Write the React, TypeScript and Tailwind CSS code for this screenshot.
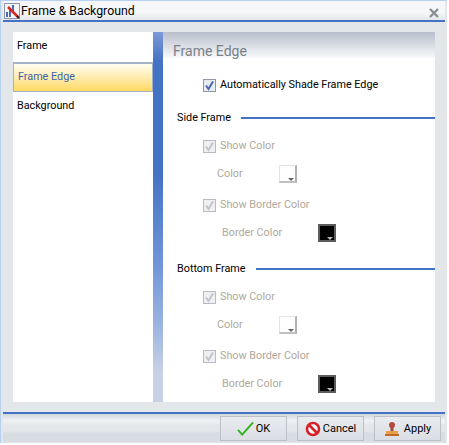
const font = "font-['Roboto',Arial,sans-serif]";

function CheckBox({ disabled }: { disabled?: boolean }) {
  return (
    <span className={`flex h-[13px] w-[13px] items-center justify-center border ${disabled ? 'border-[#b8bac8] bg-[#f0f0f2]' : 'border-[#8f98a8] bg-[#e8ebf0]'}`}>
      <svg width="11" height="11" viewBox="0 0 11 11">
        <path d="M2 5.5 L4.5 9 L9 1.5" fill="none" stroke={disabled ? '#c2c4cc' : '#4a66b0'} strokeWidth="2" />
      </svg>
    </span>
  );
}

function Swatch({ dark }: { dark?: boolean }) {
  return (
    <span className={`relative block h-[18px] w-[18px] ${dark ? 'border-2 border-[#5c5c5c] bg-black' : 'border border-b-2 border-r-2 border-t-[#e4e4e4] border-l-[#e4e4e4] border-r-[#b0b0b0] border-b-[#c0c0c0] bg-white'}`}>
      <span className={`absolute bottom-[0px] right-[1px] border-x-[3px] border-t-[3px] border-x-transparent ${dark ? 'border-t-[#bbb]' : 'border-t-[#666]'}`} />
    </span>
  );
}

function FrameGroup({ title }: { title: string }) {
  return (
    <div>
      <div className="flex h-[14px] items-center gap-[10px] pl-[14px]">
        <span className="text-black">{title}</span>
        <span className="h-[2px] flex-1 bg-[#4472c4]" />
      </div>
      <div className="mt-[14px] flex h-[14px] items-center gap-[4px] pl-[40px] text-[#b0a89c]">
        <CheckBox disabled />
        <span>Show Color</span>
      </div>
      <div className="mt-[12px] flex h-[18px] items-center pl-[54px] text-[#b0a89c]">
        <span className="w-[62px]">Color</span>
        <Swatch />
      </div>
      <div className="mt-[15px] flex h-[14px] items-center gap-[4px] pl-[40px] text-[#b0a89c]">
        <CheckBox disabled />
        <span>Show Border Color</span>
      </div>
      <div className="mt-[12px] flex h-[18px] items-center pl-[59px] text-[#b0a89c]">
        <span className="w-[96px]">Border Color</span>
        <Swatch dark />
      </div>
    </div>
  );
}

function FootButton({ children }: { children: React.ReactNode }) {
  return (
    <button className="flex h-[25px] w-[67px] items-center justify-center gap-[2px] border border-[#bcc2c8] bg-gradient-to-b from-[#e9ecef] to-[#dadee4] text-[11px] text-black">
      {children}
    </button>
  );
}

export default function App() {
  return (
    <div className={`${font} h-[445px] w-[449px] overflow-hidden bg-white text-[10.8px] leading-[14px]`}>
      <div className="flex h-[443px] w-[447px] flex-col border-l border-t border-[#b8d0f0] bg-[#e4e7ea] pl-[2px] pr-[2px]">
        <div className="flex h-[21px] items-center justify-between border-b-2 border-[#4472c4] bg-gradient-to-b from-[#f6f7f9] from-60% to-[#e4e7ea] pr-[6px]">
          <div className="flex items-center gap-[1px] pl-[1px]">
            <svg width="16" height="16" viewBox="0 0 16 16">
              <rect x="0.5" y="0.5" width="15" height="15" fill="#f4f6fa" stroke="#8a95a8" />
              <rect x="2" y="9" width="2" height="5" fill="#4a6cb8" />
              <rect x="5" y="5" width="2" height="9" fill="#4a6cb8" />
              <rect x="8" y="2" width="2" height="6" fill="#4a6cb8" />
              <path d="M4 4 L14 14" stroke="#d8261c" strokeWidth="2.5" />
              <path d="M13 13 L15 15" stroke="#222" strokeWidth="2" />
            </svg>
            <span className="text-[12.3px] text-black">Frame &amp; Background</span>
          </div>
          <svg width="10" height="10" viewBox="0 0 10 10" className="mt-[5px]">
            <path d="M1 1 L9 9 M9 1 L1 9" stroke="#8a8f96" strokeWidth="2.4" />
          </svg>
        </div>

        <div className="flex flex-1 px-[10px] pb-[10px] pt-[10px]">
          <div className="w-[140px] bg-white">
            <div className="flex h-[30px] items-center pb-[2px] pl-[4px] text-black">Frame</div>
            <div className="flex h-[30px] items-center border border-t-2 border-[#a4b2c8] bg-gradient-to-b from-[#fffdf0] to-[#ffd95e] pb-[2px] pl-[4px] text-[#3b66b0]">Frame Edge</div>
            <div className="flex h-[30px] items-center pb-[2px] pl-[4px] text-black">Background</div>
          </div>
          <div className="w-[10px] bg-[linear-gradient(to_bottom,#7d9ad6_0%,#4472c4_8%,#4472c4_38%,#6f94d8_62%,#9db6e0_80%,#c8d2e4_92%,#c8d2e4_100%)]" />
          <div className="flex-1 bg-white">
            <div className="h-[26px] bg-gradient-to-b from-[#b8bfcc] to-[#f8f9fb] pl-[10px] pt-[9px] text-[14px] leading-[20px] text-[#7a7f88]">Frame Edge</div>
            <div className="mt-[20px] flex h-[14px] items-center gap-[4px] pl-[40px] text-black">
              <CheckBox />
              <span>Automatically Shade Frame Edge</span>
            </div>
            <div className="mt-[19px] flex flex-col gap-[20px]">
              <FrameGroup title="Side Frame" />
              <FrameGroup title="Bottom Frame" />
            </div>
          </div>
        </div>

        <div className="h-[2px] bg-[#4472c4]" />
        <div className="flex h-[29px] items-start justify-end gap-[10px] bg-[linear-gradient(to_bottom,#d0d6de_0%,#f0f2f5_22%,#e4e7ea_40%,#e4e7ea_60%,#d8dce3_66%,#d8dce3_94%,#e4e7ea_100%)] pr-[4px] pt-[2px]">
          <FootButton>
            <svg width="17" height="15" viewBox="0 0 18 15">
              <path d="M1 9 L5.5 14 L17 1" fill="none" stroke="#2fb31c" strokeWidth="2" />
            </svg>
            OK
          </FootButton>
          <FootButton>
            <svg width="16" height="16" viewBox="0 0 16 16">
              <circle cx="8" cy="8" r="6" fill="#fff" stroke="#d6202a" strokeWidth="2.6" />
              <path d="M3.5 3.5 L12.5 12.5" stroke="#d6202a" strokeWidth="2.6" />
            </svg>
            Cancel
          </FootButton>
          <FootButton>
            <svg width="16" height="16" viewBox="0 0 16 16" className="mr-[2px]">
              <circle cx="8" cy="4" r="3" fill="#b84a3c" />
              <rect x="6.5" y="6" width="3" height="4" fill="#a84438" />
              <rect x="2" y="10" width="12" height="3" fill="#e8a048" />
              <rect x="1" y="13" width="14" height="2" fill="#c06a30" />
            </svg>
            Apply
          </FootButton>
        </div>
      </div>
    </div>
  );
}
